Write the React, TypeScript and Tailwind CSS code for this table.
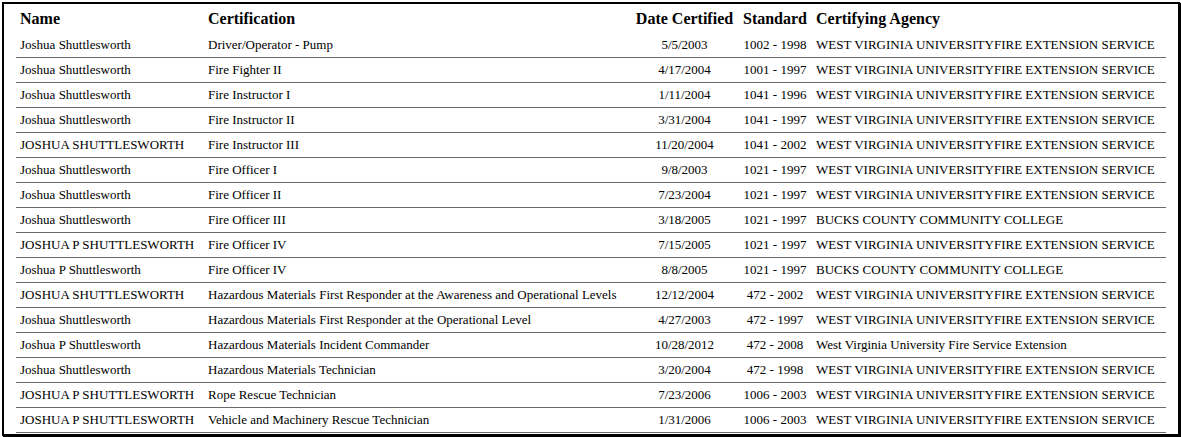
type Cert = {
  name: string;
  cert: string;
  date: string;
  standard: string;
  agency: string;
};

const WVU = 'WEST VIRGINIA UNIVERSITYFIRE EXTENSION SERVICE';
const BUCKS = 'BUCKS COUNTY COMMUNITY COLLEGE';

const rows: Cert[] = [
  { name: 'Joshua Shuttlesworth', cert: 'Driver/Operator - Pump', date: '5/5/2003', standard: '1002 - 1998', agency: WVU },
  { name: 'Joshua Shuttlesworth', cert: 'Fire Fighter II', date: '4/17/2004', standard: '1001 - 1997', agency: WVU },
  { name: 'Joshua Shuttlesworth', cert: 'Fire Instructor I', date: '1/11/2004', standard: '1041 - 1996', agency: WVU },
  { name: 'Joshua Shuttlesworth', cert: 'Fire Instructor II', date: '3/31/2004', standard: '1041 - 1997', agency: WVU },
  { name: 'JOSHUA SHUTTLESWORTH', cert: 'Fire Instructor III', date: '11/20/2004', standard: '1041 - 2002', agency: WVU },
  { name: 'Joshua Shuttlesworth', cert: 'Fire Officer I', date: '9/8/2003', standard: '1021 - 1997', agency: WVU },
  { name: 'Joshua Shuttlesworth', cert: 'Fire Officer II', date: '7/23/2004', standard: '1021 - 1997', agency: WVU },
  { name: 'Joshua Shuttlesworth', cert: 'Fire Officer III', date: '3/18/2005', standard: '1021 - 1997', agency: BUCKS },
  { name: 'JOSHUA P SHUTTLESWORTH', cert: 'Fire Officer IV', date: '7/15/2005', standard: '1021 - 1997', agency: WVU },
  { name: 'Joshua P Shuttlesworth', cert: 'Fire Officer IV', date: '8/8/2005', standard: '1021 - 1997', agency: BUCKS },
  { name: 'JOSHUA SHUTTLESWORTH', cert: 'Hazardous Materials First Responder at the Awareness and Operational Levels', date: '12/12/2004', standard: '472 - 2002', agency: WVU },
  { name: 'Joshua Shuttlesworth', cert: 'Hazardous Materials First Responder at the Operational Level', date: '4/27/2003', standard: '472 - 1997', agency: WVU },
  { name: 'Joshua P Shuttlesworth', cert: 'Hazardous Materials Incident Commander', date: '10/28/2012', standard: '472 - 2008', agency: 'West Virginia University Fire Service Extension' },
  { name: 'Joshua Shuttlesworth', cert: 'Hazardous Materials Technician', date: '3/20/2004', standard: '472 - 1998', agency: WVU },
  { name: 'JOSHUA P SHUTTLESWORTH', cert: 'Rope Rescue Technician', date: '7/23/2006', standard: '1006 - 2003', agency: WVU },
  { name: 'JOSHUA P SHUTTLESWORTH', cert: 'Vehicle and Machinery Rescue Technician', date: '1/31/2006', standard: '1006 - 2003', agency: WVU },
];

export default function App() {
  return (
    <div className="p-[2px] bg-white font-['Liberation_Serif','Times_New_Roman',serif] text-black">
      <div className="w-[1178px] h-[434px] border-2 border-black shadow-[1px_1px_0_#000] px-[12px]">
        <table className="w-[1150px] table-fixed border-collapse">
          <colgroup>
            <col className="w-[188px]" />
            <col className="w-[427px]" />
            <col className="w-[107px]" />
            <col className="w-[74px]" />
            <col className="w-[354px]" />
          </colgroup>
          <thead>
            <tr className="h-[28px] text-[16px] font-bold">
              <th className="px-[4px] pt-[2px] text-left">Name</th>
              <th className="px-[4px] pt-[2px] text-left">Certification</th>
              <th className="px-0 pt-[2px] text-center whitespace-nowrap">Date Certified</th>
              <th className="px-0 pt-[2px] text-center whitespace-nowrap">Standard</th>
              <th className="px-[4px] pt-[2px] text-left whitespace-nowrap">Certifying Agency</th>
            </tr>
          </thead>
          <tbody className="text-[13px]">
            {rows.map((r, i) => (
              <tr key={i} className="h-[25px] border-b border-[#6b6b6b]">
                <td className="px-[4px] whitespace-nowrap">{r.name}</td>
                <td className="px-[4px] whitespace-nowrap">{r.cert}</td>
                <td className="px-0 text-center whitespace-nowrap">{r.date}</td>
                <td className="px-0 text-center whitespace-nowrap">{r.standard}</td>
                <td className="px-[4px] whitespace-nowrap">{r.agency}</td>
              </tr>
            ))}
          </tbody>
        </table>
      </div>
    </div>
  );
}
